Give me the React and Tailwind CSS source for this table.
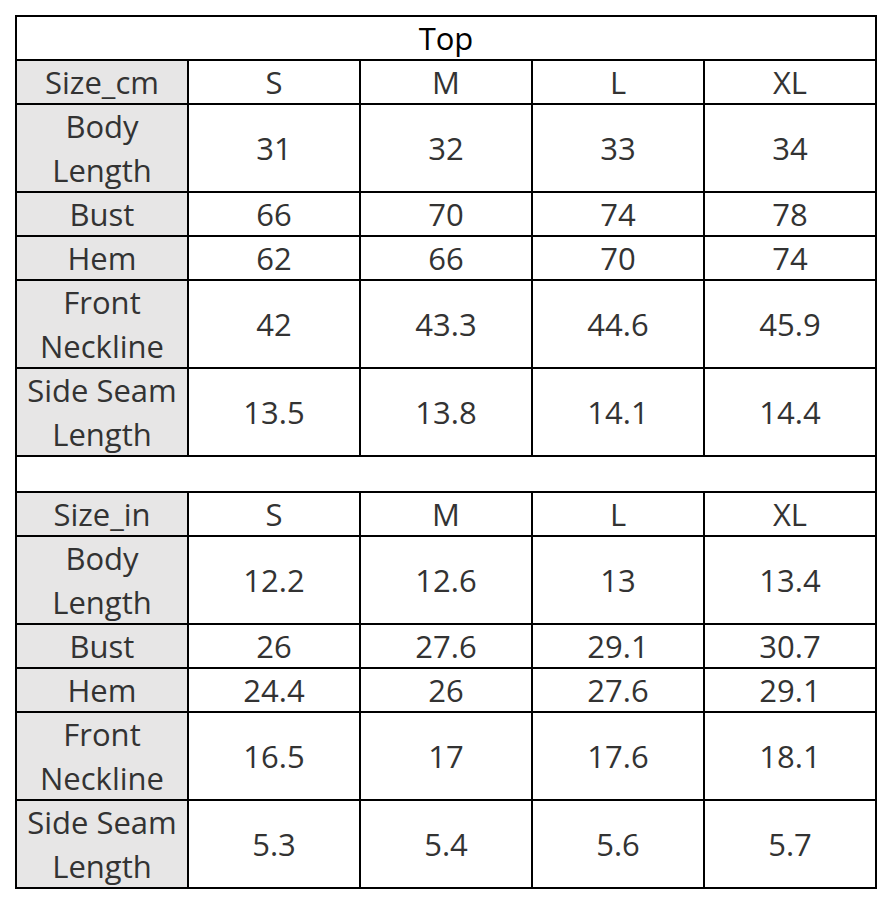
export default function App() {
  const cm = [
    ["Body\nLength", ["31", "32", "33", "34"], true],
    ["Bust", ["66", "70", "74", "78"], false],
    ["Hem", ["62", "66", "70", "74"], false],
    ["Front\nNeckline", ["42", "43.3", "44.6", "45.9"], true],
    ["Side Seam\nLength", ["13.5", "13.8", "14.1", "14.4"], true],
  ];
  const inch = [
    ["Body\nLength", ["12.2", "12.6", "13", "13.4"], true],
    ["Bust", ["26", "27.6", "29.1", "30.7"], false],
    ["Hem", ["24.4", "26", "27.6", "29.1"], false],
    ["Front\nNeckline", ["16.5", "17", "17.6", "18.1"], true],
    ["Side Seam\nLength", ["5.3", "5.4", "5.6", "5.7"], true],
  ];
  const cell = "flex items-center justify-center text-center";
  const renderBlock = (label, rows) => (
    <>
      <div className={`${cell} bg-[#e7e6e6] h-[42px]`}>{label}</div>
      {["S", "M", "L", "XL"].map((s) => (
        <div key={label + s} className={`${cell} bg-white h-[42px]`}>{s}</div>
      ))}
      {rows.map(([name, vals, tall]) => (
        <>
          <div key={label + name} className={`${cell} bg-[#e7e6e6] whitespace-pre-line ${tall ? "h-[86px]" : "h-[42px]"}`}>{name}</div>
          {vals.map((v, i) => (
            <div key={label + name + i} className={`${cell} bg-white ${tall ? "h-[86px]" : "h-[42px]"}`}>{v}</div>
          ))}
        </>
      ))}
    </>
  );
  return (
    <div className="w-[892px] h-[904px] bg-white pt-[15px] pl-[15px]">
      <div
        className="grid grid-cols-[repeat(5,170px)] gap-[2px] p-[2px] bg-black w-[862px] text-[#333333] text-[31px] leading-[44px]"
        style={{ fontFamily: '"Open Sans", "Noto Sans", sans-serif' }}
      >
        <div className={`${cell} col-span-5 bg-white h-[42px] text-black`}>Top</div>
        {renderBlock("Size_cm", cm)}
        <div className="col-span-5 bg-white h-[34px]"></div>
        {renderBlock("Size_in", inch)}
      </div>
    </div>
  );
}
